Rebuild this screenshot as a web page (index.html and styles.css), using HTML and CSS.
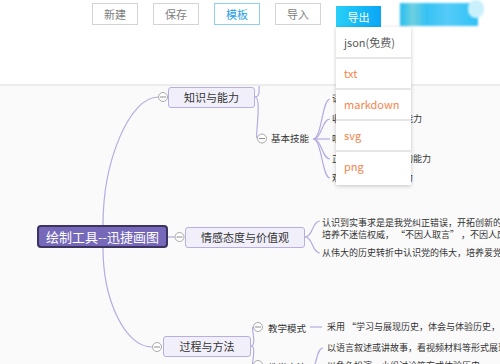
FILE: index.html
```html
<!DOCTYPE html>
<html lang="zh-CN">
<head>
  <meta charset="UTF-8" />
  <title>迅捷画图</title>
  <link rel="stylesheet" href="styles.css">
</head>
<body>
  <header class="toolbar">
    <button class="tool-btn">新建</button>
    <button class="tool-btn">保存</button>
    <button class="tool-btn active">模板</button>
    <button class="tool-btn">导入</button>
    <div class="export-wrap">
      <button class="tool-btn primary">导出</button>
      <ul class="export-menu">
        <li class="free">json(免费)</li>
        <li>txt</li>
        <li>markdown</li>
        <li>svg</li>
        <li>png</li>
      </ul>
    </div>
    <div class="blur-btn"><span></span></div>
  </header>

  <main class="canvas">
    <svg class="links" viewBox="0 86 500 278" width="500" height="278">
      <g fill="none" stroke="#b5abe0" stroke-width="1.2">
        <!-- root -> branches -->
        <path d="M103 225 C103 160 130 97 158 97" />
        <path d="M103 248 C103 300 125 347 152 347" />
        <path d="M168 237 L175 237" />
        <!-- 知识与能力 -->
        <path d="M255 97 C262 97 257 86 261 70" />
        <path d="M255 97 C262 97 255 138 257 138" />
        <!-- 基本技能 fan -->
        <path d="M313 139 C322 139 322 99 330 99" />
        <path d="M313 139 C322 139 322 119 330 119" />
        <path d="M313 139 L330 139" />
        <path d="M313 139 C322 139 322 159 330 159" />
        <path d="M313 139 C322 139 322 178 330 178" />
        <!-- 情感态度与价值观 fan -->
        <path d="M305 237 C313 237 312 221 320 221" />
        <path d="M305 237 C313 237 312 253 320 253" />
        <!-- 过程与方法 -->
        <path d="M251 346 C257 346 251 327 253 327" />
        <path d="M251 346 C257 346 251 365 253 365" />
        <path d="M310 327 L322 327" />
        <path d="M312 368 C317 368 316 348 323 348" />
      </g>
      <g class="toggles" fill="#fff" stroke="#a9a9a9" stroke-width="1">
        <circle cx="163" cy="97" r="4.5" />
        <circle cx="179.5" cy="237" r="4.5" />
        <circle cx="157" cy="347" r="4.5" />
        <circle cx="262" cy="138.5" r="4.5" />
        <circle cx="258" cy="327" r="4.5" />
        <circle cx="258" cy="365" r="4.5" />
      </g>
      <g stroke="#8f8f8f" stroke-width="1">
        <path d="M160 97 H166" />
        <path d="M176.5 237 H182.5" />
        <path d="M154 347 H160" />
        <path d="M259 138.5 H265" />
        <path d="M255 327 H261" />
        <path d="M255 365 H261" />
      </g>
    </svg>

    <div class="node root" style="left:37px;top:139px;width:131px">绘制工具--迅捷画图</div>

    <div class="node branch" style="left:168px;top:1px;width:87px">知识与能力</div>
    <div class="node branch" style="left:185px;top:141px;width:120px">情感态度与价值观</div>
    <div class="node branch" style="left:163px;top:250px;width:88px">过程与方法</div>

    <div class="topic" style="left:271px;top:45px">基本技能</div>
    <div class="leaf" style="left:332px;top:7px">语言表达能力</div>
    <div class="leaf" style="left:332px;top:27px">收集与整理史料的能力</div>
    <div class="leaf" style="left:332px;top:47px">听讲与记录笔记</div>
    <div class="leaf" style="left:332px;top:67px">正确评价历史人物的能力</div>
    <div class="leaf" style="left:332px;top:86px">观察历史图片的能力</div>

    <div class="leaf" style="left:322px;top:131px">认识到实事求是是我党纠正错误，开拓创新的思想武器<br>培养不迷信权威， “不因人取言” ，不因人废言的精神</div>
    <div class="leaf" style="left:322px;top:161px">从伟大的历史转折中认识党的伟大，培养爱党爱国的情感</div>

    <div class="topic" style="left:268px;top:235px">教学模式</div>
    <div class="leaf" style="left:327px;top:235px">采用 “学习与展现历史，体会与体验历史，感悟历史”</div>
    <div class="leaf" style="left:327px;top:256px">以语言叙述或讲故事，看视频材料等形式展现历史</div>
    <div class="topic" style="left:268px;top:274px">教学方法</div>
    <div class="leaf" style="left:327px;top:274px">以角色扮演、小组讨论等方式体验历史</div>
  </main>
</body>
</html>
```

FILE: styles.css
```css
* {
  box-sizing: border-box;
  margin: 0;
  padding: 0;
}

body {
  width: 500px;
  height: 364px;
  overflow: hidden;
  font-family: "Noto Sans CJK SC", "Noto Sans", sans-serif;
  background: #fff;
  color: #333;
}

/* toolbar */
.toolbar {
  height: 86px;
  display: flex;
  align-items: flex-start;
  gap: 15px;
  padding: 3px 0 0 92px;
  background: #fff;
  border-bottom: 2px solid #ececec;
  position: relative;
  z-index: 10;
}

.tool-btn {
  width: 46px;
  height: 22px;
  border: 1px solid #d4d4d4;
  background: #fff;
  color: #7d7d7d;
  font-family: inherit;
  font-size: 11px;
  line-height: 20px;
}

.tool-btn.active {
  border-color: #8ccff3;
  color: #2aa1e6;
}

.tool-btn.primary {
  width: 45px;
  border: none;
  background: linear-gradient(90deg, #27d0f7, #0aa6f5);
  color: #fff;
}

.export-wrap {
  position: relative;
}

.export-menu {
  position: absolute;
  left: 0;
  top: 24px;
  width: 75px;
  list-style: none;
  background: #fff;
  box-shadow: 0 1px 4px rgba(0, 0, 0, 0.22);
  padding: 1px 0 2px;
}

.export-menu li {
  height: 31px;
  line-height: 29px;
  padding-left: 8px;
  font-size: 11px;
  color: #f7834b;
  border-bottom: 2px solid #e6e6e6;
}

.export-menu li:last-child {
  border-bottom: none;
}

.export-menu li.free {
  color: #5a5a5a;
}

.blur-btn {
  margin-left: 4px;
  width: 78px;
  height: 23px;
  background: linear-gradient(90deg, #22bdf2 0%, #6fd0e0 16%, #35c2f4 34%, #55cbf8 60%, #2fc2f6 100%);
  filter: blur(1px);
  position: relative;
}

.blur-btn span {
  position: absolute;
  right: -6px;
  top: -3px;
  width: 16px;
  height: 18px;
  border-radius: 8px;
  background: #c9f1fc;
}

/* mind map canvas */
.canvas {
  position: relative;
  height: 278px;
  background: #fafafa;
  overflow: hidden;
}

.links {
  position: absolute;
  left: 0;
  top: 0;
}

.node {
  position: absolute;
  text-align: center;
  white-space: nowrap;
}

.root {
  height: 23px;
  line-height: 19px;
  background: #7669ba;
  border: 2px solid #3c345e;
  border-radius: 4px;
  color: #fff;
  font-size: 13px;
}

.branch {
  height: 21px;
  line-height: 19px;
  background: #f1effa;
  border: 1px solid #b8afe0;
  border-radius: 3px;
  font-size: 11px;
  color: #333;
}

.topic,
.leaf {
  position: absolute;
  white-space: nowrap;
  font-size: 9px;
  line-height: 12px;
  color: #333;
}

.topic {
  font-size: 9.5px;
  line-height: 14px;
}
```
